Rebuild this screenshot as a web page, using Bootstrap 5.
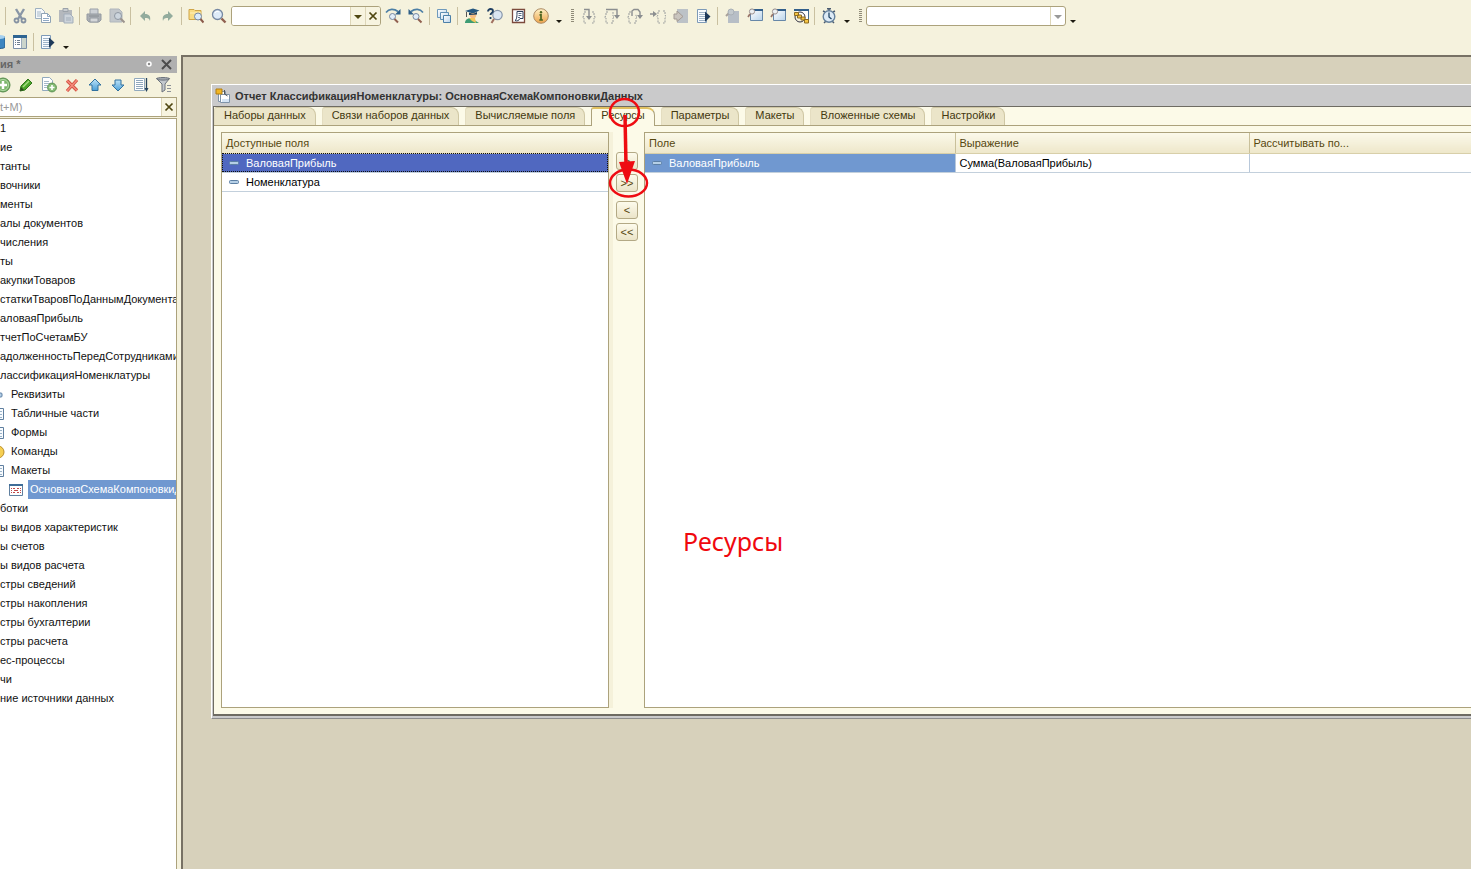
<!DOCTYPE html>
<html lang="ru">
<head>
<meta charset="utf-8">
<meta name="viewport" content="width=device-width, initial-scale=1">
<title>Конфигуратор</title>
<link href="https://cdn.jsdelivr.net/npm/bootstrap@5.3.0/dist/css/bootstrap.min.css" rel="stylesheet">
<style>
:root{--cream:#f5f2dd;--edge:#aca27c;--ink:#56470f;--sel:#7098d0}
body{font:11px/19px "Liberation Sans",Arial,sans-serif;background:var(--cream);color:#111;overflow:hidden}
svg{display:block}
.toolbar-row{gap:1px;height:32px;padding-left:4px}
.toolbar-row.second{height:23px;padding-left:0;margin-left:-14px;padding-bottom:3px}
.tool{width:22px;height:22px;padding:3px;border:0;border-radius:2px;background:none;flex:none}
.tool:hover{background:#e9e2bd}
.divider{flex:none;width:4px;height:18px;background:linear-gradient(#c9c0a0,#c9c0a0) 1px 0/1px 100% no-repeat}
.more{flex:none;width:12px;height:22px;padding:0;border:0;background:none}
.grip{flex:none;width:9px;height:14px;margin-left:2px;background:repeating-linear-gradient(#8f8b78 0 1px,transparent 1px 2px) 3px 0/3px 100% no-repeat}
.search-combo{width:150px;height:20px;border:1px solid var(--edge);border-radius:3px;background:#fff;overflow:hidden;flex:none}
.search-combo input,.tree-search input{border:0;border-radius:0;padding:0 4px;min-height:0;font-size:11px;background:#fff}
.mini{flex:none;width:15px;padding:0;border:0;border-left:1px solid #ddd6b8;background:#f7f4e0}
.proc-select{width:200px;height:20px;flex:none;border:1px solid var(--edge);border-radius:3px;padding:0 20px 0 4px;font-size:11px;
 background:#fff url("data:image/svg+xml,%3Csvg xmlns='http://www.w3.org/2000/svg' width='15' height='18'%3E%3Cpath d='M.5 0v18' stroke='%23ddd6b8'/%3E%3Cpath d='M4 8h8l-4 4z' fill='%23999'/%3E%3C/svg%3E") right 0 top 0/15px 18px no-repeat}
.side{width:181px;flex:none;padding-right:4px;padding-top:1px}
.side-head{height:17px;background:#b0b0b0;color:#666;font-weight:bold;line-height:15px}
.side-head button{border:0;background:none;padding:0}
.side-tools{gap:1px;height:24px;margin-left:-8px}
.tree-search{height:20px;border:1px solid var(--edge);border-left:0;background:#fff;margin-bottom:1px}
.tree-search input{padding-left:0}
.tree-search input::placeholder{color:#999}
.tree{border:1px solid var(--edge);border-width:1px 1px 0 0;background:#fff;overflow:hidden;white-space:nowrap;min-height:0}
.tree li{height:19px;gap:4px}
.tree svg{flex:none}
.lv3 .node,.lv4 .node{padding-left:2px}
.lv3{margin-left:-11px}
.lv4{margin-left:8px}
.lv4 .node{background:var(--sel);color:#fff;flex:1}
.desk{background:#d7d1bb;border-left:2px solid #777164;border-top:2px solid #777164;padding:27px 0 150px 28px;min-width:0}
.win{background:#cacacb;border:1px solid #fff;border-right:0;border-bottom-color:#8c8c8c;padding:0 0 2px 1px}
.win-title{height:21px;gap:4px;padding-left:2px;font-weight:bold;color:#333;line-height:21px;padding-top:1px}
.win-body{background:#fcfae8;border:1px solid #6e6b62;border-right:0;border-bottom-width:2px}
.nav-tabs{gap:6px;border-bottom:1px solid var(--edge);height:19px;margin-bottom:6px}
.nav-tabs .nav-link{height:18px;padding:0 9px 2px;line-height:15px;border:1px solid #cfc7a4;border-bottom:0;border-left-color:#e4ddc0;border-radius:3px 8px 0 0;background:#ebe5c9;color:#43380f;margin:0;font-size:11px}
.nav-tabs .nav-link.active{height:19px;padding-bottom:4px;background:#fcfae8;border-color:var(--edge);border-top:2px solid #e0c060;line-height:13px;color:#43380f}
.panes{padding:0 0 6px 7px;min-height:0}
.pane{background:#fff;border:1px solid var(--edge)}
.avail{width:388px;flex:none}
.res{flex:1;border-right:0;min-width:0;position:relative}
.grid-view{margin:0;font-size:11px;table-layout:fixed;--bs-table-bg:transparent}
.grid-view th{height:20px;padding:0 4px 1px;font-weight:normal;color:var(--ink);line-height:18px;background:linear-gradient(#fbf9ea,#eee7ca);border:0;border-bottom:1px solid #d8cfa9;border-right:1px solid #c9c09a}
.grid-view td{height:19px;padding:0 4px;line-height:18px;border:0;border-bottom:1px solid #c3d0dc;border-right:1px solid #b8c8da;color:#000}
.grid-view th:last-child,.grid-view td:last-child{border-right:0}
.grid-view td svg{display:inline-block;vertical-align:1px;margin:0 7px 0 3px}
.grid-view td.strong{background:#5068c0;color:#fff;outline:1px dotted #111;outline-offset:-1px}
.grid-view td.soft{background:var(--sel);color:#fff}
.c1{width:310px}.c2{width:294px}
.movers{width:35px;flex:none;padding:20px 0 0 3px;border-left:4px solid #f5f1da;gap:4px}
.movers button{width:22px;height:18px;padding:0;border:1px solid #b3a985;border-radius:3px;background:linear-gradient(#fdfbec,#ebe4c8);color:var(--ink);font-size:11px;line-height:15px}
.movers .gap-above{margin-top:5px}
.caption-note{position:absolute;left:38px;top:389px;font:25px/38px "Noto Sans","Open Sans",sans-serif;color:#f0080e}
.marks{position:absolute;left:394px;top:-10px;pointer-events:none}
</style>
</head>
<body class="vh-100 d-flex flex-column">
<svg width="0" height="0" class="position-absolute" aria-hidden="true">
<defs>
<linearGradient id="gl" x2="1" y2="1"><stop stop-color="#fff"/><stop offset="1" stop-color="#b9d3ea"/></linearGradient>
<linearGradient id="gy" x2="0" y2="1"><stop stop-color="#fff3c8"/><stop offset="1" stop-color="#eda34a"/></linearGradient>
<linearGradient id="gb" x2="0" y2="1"><stop stop-color="#bfe4f8"/><stop offset="1" stop-color="#4a9fd8"/></linearGradient>
</defs>
<symbol id="cut" viewBox="0 0 16 16"><path d="M4 1l6 10M12 1L6 11" stroke="#8996a6" stroke-width="2.400" fill="none"/><circle cx="4.500" cy="12.500" r="2" fill="none" stroke="#8592a2" stroke-width="1.800"/><circle cx="11.500" cy="12.500" r="2" fill="none" stroke="#8592a2" stroke-width="1.800"/></symbol>
<symbol id="copy" viewBox="0 0 16 16"><path d="M.5.5h6l3 3v7h-9z" fill="#f5f8fa" stroke="#9db0c0"/><path d="M2 4h4M2 6h4M2 8h4" stroke="#a5b8c8"/><path d="M6.500 5.500h6l3 3v6h-9z" fill="#fff" stroke="#8fa3b5"/><path d="M12.500 5.500v3h3M8 10.500h6M8 12.500h6" stroke="#8fa9c4" fill="none"/></symbol>
<symbol id="paste" viewBox="0 0 16 16"><path d="M1 2h13v12H1z" fill="#b4b8bd"/><path d="M5 .5h5v3H5z" fill="#c8ccd0" stroke="#9ba2a9"/><path d="M6 6h6l3 3v6H6z" fill="#ccd3da" stroke="#a3aeba"/><path d="M8 10h5M8 12h5" stroke="#a3aeba"/></symbol>
<symbol id="print" viewBox="0 0 16 16"><path d="M4 1h8v6H4z" fill="#ccd0d4" stroke="#9aa0a8"/><path d="M1 6h14v6l-2 2H3l-2-2z" fill="#abafb3" stroke="#959ba2"/><path d="M4 10h8v4H4z" fill="#d4d6d8" stroke="#959ba2"/><path d="M3 8h10" stroke="#868c92"/></symbol>
<symbol id="preview" viewBox="0 0 16 16"><path d="M1 1h9l3 3v10H1z" fill="#c2c7cb" stroke="#b0b6bc"/><circle cx="9" cy="8" r="3.500" fill="#ccd5dd" stroke="#8f98a2"/><path d="M11.500 10.500l4 4" stroke="#9c948e" stroke-width="2"/></symbol>
<symbol id="undo" viewBox="0 0 16 16"><path d="M3 8l5-5v3c4 0 6 2 5 7-1-3-2-3-5-3v3z" fill="#93ac9d"/></symbol>
<symbol id="redo" viewBox="0 0 16 16"><path d="M13 8L8 3v3c-4 0-6 2-5 7 1-3 2-3 5-3v3z" fill="#93ac9d"/></symbol>
<symbol id="folderfind" viewBox="0 0 16 16"><path d="M1 1.500h5l1 1h6v9H1z" fill="#f9dc84" stroke="#cfa548"/><path d="M2 5h11" stroke="#fff2c0"/><circle cx="10" cy="8.500" r="3.500" fill="#dcebf8" stroke="#7688a2"/><path d="M12.500 11l3 3.500" stroke="#8a5a4a" stroke-width="2"/></symbol>
<symbol id="find" viewBox="0 0 16 16"><circle cx="6.500" cy="6.500" r="5" fill="#deebf8" stroke="#7688a2" stroke-width="1.300"/><path d="M4 5c1-2 3-2 4-1" stroke="#fff" fill="none"/><path d="M10.500 10.500l4 4" stroke="#906050" stroke-width="2.400"/></symbol>
<symbol id="findnext" viewBox="0 0 16 16"><path d="M1 4.500c3-4 8-4 12-1" fill="none" stroke="#4c7fa6" stroke-width="1.600"/><path d="M15.500 1v5.500h-5.500z" fill="#2f5f88"/><circle cx="7.500" cy="8.500" r="3" fill="#e2edf8" stroke="#7688a2"/><path d="M9.500 11l3.500 3.500" stroke="#906050" stroke-width="2"/></symbol>
<symbol id="findprev" viewBox="0 0 16 16"><path d="M15 4.500c-3-4-8-4-12-1" fill="none" stroke="#4c7fa6" stroke-width="1.600"/><path d="M.5 1v5.500h5.500z" fill="#2f5f88"/><circle cx="8" cy="8.500" r="3" fill="#e2edf8" stroke="#7688a2"/><path d="M10 11l3.500 3.500" stroke="#906050" stroke-width="2"/></symbol>
<symbol id="windows" viewBox="0 0 16 16"><path d="M1.500 1.500h9v8h-9z" fill="url(#gl)" stroke="#6f9abc"/><path d="M4.500 4.500h8v7h-8z" fill="url(#gl)" stroke="#5f8fb4"/><path d="M7.500 7.500h7v7h-7z" fill="url(#gl)" stroke="#4b7fa8"/></symbol>
<symbol id="grad" viewBox="0 0 16 16"><path d="M1 14c1-3 3-4 6-4l8 5H1z" fill="#3d9c74"/><path d="M5 10h6l1 5-4-2z" fill="#f3c75c"/><circle cx="9" cy="7" r="3.300" fill="#f5bd82"/><path d="M1 3l8-2.500 6.500 2L9 5.500z" fill="#24577f"/><path d="M5 4.500v2.500l8-.5V4L9 6z" fill="#173f62"/><path d="M2.500 4v5" stroke="#555"/></symbol>
<symbol id="helpfind" viewBox="0 0 16 16"><circle cx="10.500" cy="7" r="4.700" fill="#dbe6f2" stroke="#8796aa" stroke-width="1.200"/><path d="M7 11l-2.500 4" stroke="#a07060" stroke-width="2"/><path d="M1 3.500c0-3.500 5-3 5-.5 0 2-2.500 2-2.500 4M3.500 9v2" fill="none" stroke="#203f62" stroke-width="1.800"/></symbol>
<symbol id="syntax" viewBox="0 0 16 16"><path d="M2.500 1.500h12v13h-12z" fill="#fff" stroke="#7c4a3c" stroke-width="1.300"/><path d="M7 3.500h6v7h-3c-1 2-3 3-5 2 2-1 2-5 2-9z" fill="#fff" stroke="#2b3d58"/><path d="M8.500 5.500h3M8.500 7.500h3M8 9.500h2" stroke="#5b6d88"/></symbol>
<symbol id="info" viewBox="0 0 16 16"><circle cx="8" cy="8" r="7.300" fill="url(#gy)" stroke="#ad8a64"/><circle cx="8" cy="4.300" r="1.200" fill="#4c6520"/><path d="M6.500 6.800H8v5M6.300 12h3.600" stroke="#4c6520" stroke-width="1.700" fill="none"/></symbol>
<symbol id="stepin" viewBox="0 0 16 16"><path d="M5 4H3v4L1.500 9 3 10v5h2M11 4h2v4l1.500 1L13 10v5h-2" fill="none" stroke="#999c9c" stroke-dasharray="2 1"/><path d="M3 1.500h5V9" fill="none" stroke="#8b8e90" stroke-width="1.400"/><path d="M5 8h6l-3 4z" fill="#8b8e90"/></symbol>
<symbol id="stepover" viewBox="0 0 16 16"><path d="M4 4H2v4L.5 9 2 10v5h2M7 15h2v-5l1-1-1-1V4" fill="none" stroke="#999c9c" stroke-dasharray="2 1"/><path d="M2 1.500h11V8" fill="none" stroke="#8b8e90" stroke-width="1.400"/><path d="M10 7h6l-3 4z" fill="#8b8e90"/></symbol>
<symbol id="stepout" viewBox="0 0 16 16"><path d="M4 4H2v4L.5 9 2 10v5h2M7 15h2v-5l1-1-1-1V6" fill="none" stroke="#999c9c" stroke-dasharray="2 1"/><path d="M5 8V3l2-1.500h4L13 4v4" fill="none" stroke="#8b8e90" stroke-width="1.400"/><path d="M10 7h6l-3 4z" fill="#8b8e90"/></symbol>
<symbol id="tocursor" viewBox="0 0 16 16"><path d="M0 6h4" stroke="#8b8e90" stroke-width="1.500"/><path d="M3 3l4 3-4 3z" fill="#8b8e90"/><path d="M10 3H8v4L7 8.500 8 10v5h2M13 3h2v4l1 1.500-1 1.500v5h-2" fill="none" stroke="#999c9c" stroke-dasharray="2 1"/></symbol>
<symbol id="curline" viewBox="0 0 16 16"><path d="M4 1h11v14H4z" fill="#bcc2c7"/><path d="M1 6h3V3l6 5.500-6 5V11H1z" fill="#c9c4be" stroke="#a39a94"/></symbol>
<symbol id="script" viewBox="0 0 16 16"><path d="M1.500 1.500h9v13h-9z" fill="#f9fcff" stroke="#7d9ab8"/><path d="M3 4.500h6M3 6.500h6M3 8.500h6M3 10.500h6M3 12.500h6" stroke="#9fb4c8"/><path d="M9 3.500l5.500 5L9 14z" fill="#1e3a5a"/></symbol>
<symbol id="greydoc" viewBox="0 0 16 16"><path d="M4 3h11v12H4z" fill="#b7bec6"/><path d="M2 8l4-4" stroke="#a8a09a" stroke-width="2"/><circle cx="7" cy="4" r="3" fill="#c3c9cd" stroke="#a9b0b6"/></symbol>
<symbol id="watch" viewBox="0 0 16 16"><path d="M3.500 2.500h12v10h-12z" fill="url(#gl)" stroke="#6687a8"/><path d="M3 1h13v2H3z" fill="#325f8b"/><circle cx="5" cy="3.500" r="2.600" fill="#edf0f2" stroke="#9d9290"/><path d="M3 6L1 9" stroke="#987468" stroke-width="1.700"/></symbol>
<symbol id="callstack" viewBox="0 0 16 16"><path d="M1.500 1.500h14v13" fill="#fff" stroke="#456c94"/><path d="M1 1h15v2H1z" fill="#325f8b"/><circle cx="7" cy="9" r="5" stroke="#334" fill="none"/><path d="M1.500 4.500h4v3h-4zM4.500 7h4v3h-4zM8 9h4v3H8zM11.500 11.500h4v3.500h-4z" fill="#f6c544" stroke="#8b6a22"/></symbol>
<symbol id="timer" viewBox="0 0 16 16"><path d="M6 .8h4M8 1v2M2 3l2 1M14 3l-2 1M3 15l2-2M13 15l-2-2" stroke="#4a5b70" stroke-width="1.500"/><circle cx="8" cy="8.500" r="5.800" fill="#dceaf6" stroke="#64809c" stroke-width="1.400"/><path d="M8 4.500v4.500l2.500 2" stroke="#1f4566" fill="none" stroke-width="1.300"/></symbol>
<symbol id="db" viewBox="0 0 16 16"><path d="M4 3v10c0 2 12 2 12 0V3z" fill="#3d86c0" stroke="#245b8a"/><ellipse cx="10" cy="3" rx="6" ry="2" fill="#a5d0ef"/></symbol>
<symbol id="form" viewBox="0 0 16 16"><path d="M1.500 1.500h13v13h-13z" fill="#fff" stroke="#7d91a8"/><path d="M1 1h14v3H1z" fill="#2e6492"/><path d="M10 4h4v10h-4z" fill="#cbd5cc"/><path d="M3 6.500h1m1 0h3M3 8.500h1m1 0h3M3 10.500h1m1 0h3" stroke="#6f7f8f"/><path d="M9.500 4v10" stroke="#9aaabb"/></symbol>
<symbol id="add" viewBox="0 0 16 16"><circle cx="8" cy="8" r="7" fill="#7bb56c" stroke="#568a4b"/><circle cx="8" cy="8" r="5.500" fill="none" stroke="#b4dca8"/><path d="M8 4v8M4 8h8" stroke="#fff" stroke-width="2.500"/></symbol>
<symbol id="pencil" viewBox="0 0 16 16"><path d="M2 14l1-5 7-7 4 4-7 7z" fill="#4da52a" stroke="#2f761a"/><path d="M5 10l6-6" stroke="#a6df83" stroke-width="1.500"/><path d="M2 14l1-4 3 3z" fill="#2d4b20"/></symbol>
<symbol id="docadd" viewBox="0 0 16 16"><path d="M1.500.5h7l3 3v10h-10z" fill="#fff" stroke="#91a9bd"/><path d="M3 4.500h5M3 6.500h6M3 8.500h4M3 10.500h3" stroke="#a5b9c9"/><circle cx="11" cy="10.500" r="4.400" fill="#85bc76" stroke="#5a9050"/><path d="M11 8v5M8.500 10.500h5" stroke="#fff" stroke-width="1.600"/></symbol>
<symbol id="del" viewBox="0 0 16 16"><path d="M3 3.500l10 10M13 3l-10 11" stroke="#d0503f" stroke-width="3.200"/><path d="M3 3.500l10 10M13 3l-10 11" stroke="#f4887a" stroke-width="1.600"/></symbol>
<symbol id="up" viewBox="0 0 16 16"><path d="M8 2l6 6h-3v5.500H5V8H2z" fill="url(#gb)" stroke="#31719f"/></symbol>
<symbol id="down" viewBox="0 0 16 16"><path d="M8 14L2 8h3V3h6v5h3z" fill="url(#gb)" stroke="#31719f"/></symbol>
<symbol id="sort" viewBox="0 0 16 16"><path d="M1.500 1.500h10v12h-10z" fill="#fff" stroke="#91a9bd"/><path d="M3 3.500h7M3 5.500h7M3 7.500h7M3 9.500h7M3 11.500h7" stroke="#8ea7bc"/><path d="M13.500 1v12" stroke="#27445f" stroke-width="1.300"/><path d="M11.500 11h4l-2 4z" fill="#27445f"/></symbol>
<symbol id="filter" viewBox="0 0 16 16"><path d="M.5 1.500h13L9 7v6l-3 2V7z" fill="#c3c8cd" stroke="#6c737c"/><ellipse cx="7" cy="1.800" rx="6.500" ry="1.300" fill="#a2a8ae" stroke="#6c737c"/><path d="M11 8.500h4M11 11.500h4M11 14.500h4" stroke="#8d9298"/></symbol>
<symbol id="cross" viewBox="0 0 16 16"><path d="M4 4l8 8M12 4l-8 8" stroke="#4f4711" stroke-width="2"/></symbol>
<symbol id="caret" viewBox="0 0 12 22"><path d="M3 15h6l-3 3z" fill="#1c1a10"/></symbol>
<symbol id="sheet" viewBox="0 0 16 16"><path d="M1.500 2.500h13v11h-13z" fill="#f8fbfe" stroke="#5f7f9f"/><path d="M10 5.500h3M10 8.500h3M10 11.500h3" stroke="#9ab3c8"/></symbol>
<symbol id="dash" viewBox="0 0 10 6"><rect x=".5" y="1.500" width="9" height="3" rx="1" fill="#b5cfe6" stroke="#5c7fa4"/></symbol>
</svg>

<header>
<div class="toolbar-row d-flex align-items-center">
<span class="divider"></span>
<button class="tool" aria-label="Вырезать"><svg width="16" height="16"><use href="#cut"/></svg></button>
<button class="tool" aria-label="Копировать"><svg width="16" height="16"><use href="#copy"/></svg></button>
<button class="tool" aria-label="Вставить"><svg width="16" height="16"><use href="#paste"/></svg></button>
<span class="divider"></span>
<button class="tool" aria-label="Печать"><svg width="16" height="16"><use href="#print"/></svg></button>
<button class="tool" aria-label="Просмотр"><svg width="16" height="16"><use href="#preview"/></svg></button>
<span class="divider"></span>
<button class="tool" aria-label="Отменить"><svg width="16" height="16"><use href="#undo"/></svg></button>
<button class="tool" aria-label="Вернуть"><svg width="16" height="16"><use href="#redo"/></svg></button>
<span class="divider"></span>
<button class="tool" aria-label="Глобальный поиск"><svg width="16" height="16"><use href="#folderfind"/></svg></button>
<button class="tool" aria-label="Найти"><svg width="16" height="16"><use href="#find"/></svg></button>
<div class="search-combo d-flex">
<input type="text" class="form-control shadow-none" aria-label="Строка поиска">
<button class="mini" aria-label="Список"><svg width="14" height="18"><path d="M3 8h8l-4 4z" fill="#4f4711"/></svg></button>
<button class="mini" aria-label="Очистить"><svg width="14" height="18"><use href="#cross"/></svg></button>
</div>
<button class="tool" aria-label="Найти следующий"><svg width="16" height="16"><use href="#findnext"/></svg></button>
<button class="tool" aria-label="Найти предыдущий"><svg width="16" height="16"><use href="#findprev"/></svg></button>
<span class="divider"></span>
<button class="tool" aria-label="Окна"><svg width="16" height="16"><use href="#windows"/></svg></button>
<span class="divider"></span>
<button class="tool" aria-label="Обучение"><svg width="16" height="16"><use href="#grad"/></svg></button>
<button class="tool" aria-label="Поиск в справке"><svg width="16" height="16"><use href="#helpfind"/></svg></button>
<button class="tool" aria-label="Синтакс-помощник"><svg width="16" height="16"><use href="#syntax"/></svg></button>
<button class="tool" aria-label="О программе"><svg width="16" height="16"><use href="#info"/></svg></button>
<button class="more" aria-label="Ещё"><svg width="12" height="22"><use href="#caret"/></svg></button>
<span class="grip"></span>
<button class="tool" aria-label="Шагнуть в"><svg width="16" height="16"><use href="#stepin"/></svg></button>
<button class="tool" aria-label="Шагнуть через"><svg width="16" height="16"><use href="#stepover"/></svg></button>
<button class="tool" aria-label="Шагнуть из"><svg width="16" height="16"><use href="#stepout"/></svg></button>
<button class="tool" aria-label="Идти до курсора"><svg width="16" height="16"><use href="#tocursor"/></svg></button>
<button class="tool" aria-label="Текущая строка"><svg width="16" height="16"><use href="#curline"/></svg></button>
<button class="tool" aria-label="Модуль"><svg width="16" height="16"><use href="#script"/></svg></button>
<span class="divider"></span>
<button class="tool" aria-label="Вычислить"><svg width="16" height="16"><use href="#greydoc"/></svg></button>
<button class="tool" aria-label="Табло"><svg width="16" height="16"><use href="#watch"/></svg></button>
<button class="tool" aria-label="Локальные переменные"><svg width="16" height="16"><use href="#watch"/></svg></button>
<button class="tool" aria-label="Стек вызовов"><svg width="16" height="16"><use href="#callstack"/></svg></button>
<span class="divider"></span>
<button class="tool" aria-label="Замер"><svg width="16" height="16"><use href="#timer"/></svg></button>
<button class="more" aria-label="Ещё"><svg width="12" height="22"><use href="#caret"/></svg></button>
<span class="grip"></span>
<select class="form-select proc-select shadow-none" aria-label="Процедуры"><option></option></select>
<button class="more" aria-label="Ещё"><svg width="12" height="22"><use href="#caret"/></svg></button>
</div>
<div class="toolbar-row second d-flex align-items-center">
<button class="tool" aria-label="База данных"><svg width="16" height="16"><use href="#db"/></svg></button>
<button class="tool" aria-label="Конфигурация"><svg width="16" height="16"><use href="#form"/></svg></button>
<span class="divider"></span>
<button class="tool" aria-label="Запуск"><svg width="16" height="16"><use href="#script"/></svg></button>
<button class="more" aria-label="Ещё"><svg width="12" height="22"><use href="#caret"/></svg></button>
</div>
</header>

<div class="d-flex flex-grow-1 overflow-hidden">
<aside class="side d-flex flex-column overflow-hidden">
<div class="side-head d-flex align-items-center">
<span class="flex-grow-1">ия *</span>
<button class="me-2" aria-label="Закрепить"><svg width="8" height="10"><circle cx="4" cy="4" r="2" fill="#8c8c8c" stroke="#fff" stroke-width="1.500"/></svg></button>
<button class="me-1" aria-label="Закрыть"><svg width="12" height="12"><path d="M1 1l9 9M10 1L1 10" stroke="#4d4d4d" stroke-width="2"/></svg></button>
</div>
<div class="side-tools d-flex align-items-center">
<button class="tool" aria-label="Добавить"><svg width="16" height="16"><use href="#add"/></svg></button>
<button class="tool" aria-label="Изменить"><svg width="16" height="16"><use href="#pencil"/></svg></button>
<button class="tool" aria-label="Добавить копированием"><svg width="16" height="16"><use href="#docadd"/></svg></button>
<button class="tool" aria-label="Удалить"><svg width="16" height="16"><use href="#del"/></svg></button>
<button class="tool" aria-label="Вверх"><svg width="16" height="16"><use href="#up"/></svg></button>
<button class="tool" aria-label="Вниз"><svg width="16" height="16"><use href="#down"/></svg></button>
<button class="tool" aria-label="Сортировать"><svg width="16" height="16"><use href="#sort"/></svg></button>
<button class="tool" aria-label="Отбор"><svg width="16" height="16"><use href="#filter"/></svg></button>
</div>
<div class="tree-search d-flex">
<input type="text" class="form-control shadow-none" placeholder="t+M)" aria-label="Поиск">
<button class="mini" aria-label="Очистить"><svg width="14" height="18"><use href="#cross"/></svg></button>
</div>
<ul class="tree list-unstyled mb-0 flex-grow-1">
<li><span class="node">1</span></li>
<li><span class="node">ие</span></li>
<li><span class="node">танты</span></li>
<li><span class="node">вочники</span></li>
<li><span class="node">менты</span></li>
<li><span class="node">алы документов</span></li>
<li><span class="node">числения</span></li>
<li><span class="node">ты</span></li>
<li><span class="node">акупкиТоваров</span></li>
<li><span class="node">статкиТваровПоДаннымДокумента</span></li>
<li><span class="node">аловаяПрибыль</span></li>
<li><span class="node">тчетПоСчетамБУ</span></li>
<li><span class="node">адолженностьПередСотрудниками</span></li>
<li><span class="node">лассификацияНоменклатуры</span></li>
<li class="lv3 d-flex align-items-center"><svg width="16" height="16"><rect x="6" y="6" width="7" height="4" rx="1" fill="#b5cfe6" stroke="#5c7fa4"/></svg><span class="node">Реквизиты</span></li>
<li class="lv3 d-flex align-items-center"><svg width="16" height="16"><use href="#sheet"/></svg><span class="node">Табличные части</span></li>
<li class="lv3 d-flex align-items-center"><svg width="16" height="16"><use href="#sheet"/></svg><span class="node">Формы</span></li>
<li class="lv3 d-flex align-items-center"><svg width="16" height="16"><circle cx="9" cy="8" r="6" fill="#f6cf52" stroke="#b98d2a"/></svg><span class="node">Команды</span></li>
<li class="lv3 d-flex align-items-center"><svg width="16" height="16"><use href="#sheet"/></svg><span class="node">Макеты</span></li>
<li class="lv4 d-flex align-items-center"><svg width="16" height="16"><path d="M1.500 2.500h13v11h-13z" fill="#fff" stroke="#5f7f9f"/><path d="M1 2h14v2H1z" fill="#3f6d98"/><path d="M5 6.500h2m2 0h2M6 8.500h4M5 10.500h2m2 0h2" stroke="#c04a4a"/><path d="M3.500 6v5M12.500 6v5" stroke="#c04a4a" stroke-dasharray="1 1"/></svg><span class="node">ОсновнаяСхемаКомпоновкиД</span></li>
<li><span class="node">ботки</span></li>
<li><span class="node">ы видов характеристик</span></li>
<li><span class="node">ы счетов</span></li>
<li><span class="node">ы видов расчета</span></li>
<li><span class="node">стры сведений</span></li>
<li><span class="node">стры накопления</span></li>
<li><span class="node">стры бухгалтерии</span></li>
<li><span class="node">стры расчета</span></li>
<li><span class="node">ес-процессы</span></li>
<li><span class="node">чи</span></li>
<li><span class="node">ние источники данных</span></li>
</ul>
</aside>

<main class="desk flex-grow-1 d-flex">
<section class="win flex-grow-1 d-flex flex-column">
<div class="win-title d-flex align-items-center">
<svg width="16" height="16"><path d="M3.500 3.500h7v10h-7z" fill="#fff" stroke="#7f93a8"/><path d="M5.500 6.500h9v8h-9z" fill="#fff" stroke="#7f93a8"/><path d="M7 11h7v3H7z" fill="#d4e4f4"/><path d="M1 1h6v5H1z" fill="#f2b624" stroke="#b07c10"/><path d="M9.500 2v4l3 2" stroke="#555" fill="none"/></svg>
<span>Отчет КлассификацияНоменклатуры: ОсновнаяСхемаКомпоновкиДанных</span>
</div>
<div class="win-body flex-grow-1 d-flex flex-column position-relative">
<div class="nav nav-tabs flex-nowrap" role="tablist">
<button class="nav-link" role="tab">Наборы данных</button>
<button class="nav-link" role="tab">Связи наборов данных</button>
<button class="nav-link" role="tab">Вычисляемые поля</button>
<button class="nav-link active" role="tab" aria-selected="true">Ресурсы</button>
<button class="nav-link" role="tab">Параметры</button>
<button class="nav-link" role="tab">Макеты</button>
<button class="nav-link" role="tab">Вложенные схемы</button>
<button class="nav-link" role="tab">Настройки</button>
</div>
<div class="panes d-flex flex-grow-1">
<div class="pane avail">
<table class="table grid-view">
<thead><tr><th>Доступные поля</th></tr></thead>
<tbody>
<tr><td class="strong"><svg width="10" height="6"><use href="#dash"/></svg>ВаловаяПрибыль</td></tr>
<tr><td><svg width="10" height="6"><use href="#dash"/></svg>Номенклатура</td></tr>
</tbody>
</table>
</div>
<div class="movers d-flex flex-column">
<button>&gt;</button>
<button>&gt;&gt;</button>
<button class="gap-above">&lt;</button>
<button>&lt;&lt;</button>
</div>
<div class="pane res">
<table class="table grid-view">
<colgroup><col class="c1"><col class="c2"><col></colgroup>
<thead><tr><th>Поле</th><th>Выражение</th><th>Рассчитывать по...</th></tr></thead>
<tbody><tr><td class="soft"><svg width="10" height="6"><use href="#dash"/></svg>ВаловаяПрибыль</td><td>Сумма(ВаловаяПрибыль)</td><td></td></tr></tbody>
</table>
<div class="caption-note">Ресурсы</div>
</div>
</div>
<svg class="marks" width="42" height="104" viewBox="0 0 42 104"><g fill="none" stroke="#ee0c12" stroke-width="2.500"><ellipse cx="16.500" cy="15.500" rx="14.500" ry="13.500"/><ellipse cx="20.500" cy="86" rx="18.500" ry="13.500"/></g><path d="M17 18l1 50" stroke="#ee0c12" stroke-width="3.500"/><path d="M11 65l16-1-8 23z" fill="#ee0c12"/></svg>
</div>
</section>
</main>
</div>
<script src="https://cdn.jsdelivr.net/npm/bootstrap@5.3.0/dist/js/bootstrap.bundle.min.js"></script>
</body>
</html>
